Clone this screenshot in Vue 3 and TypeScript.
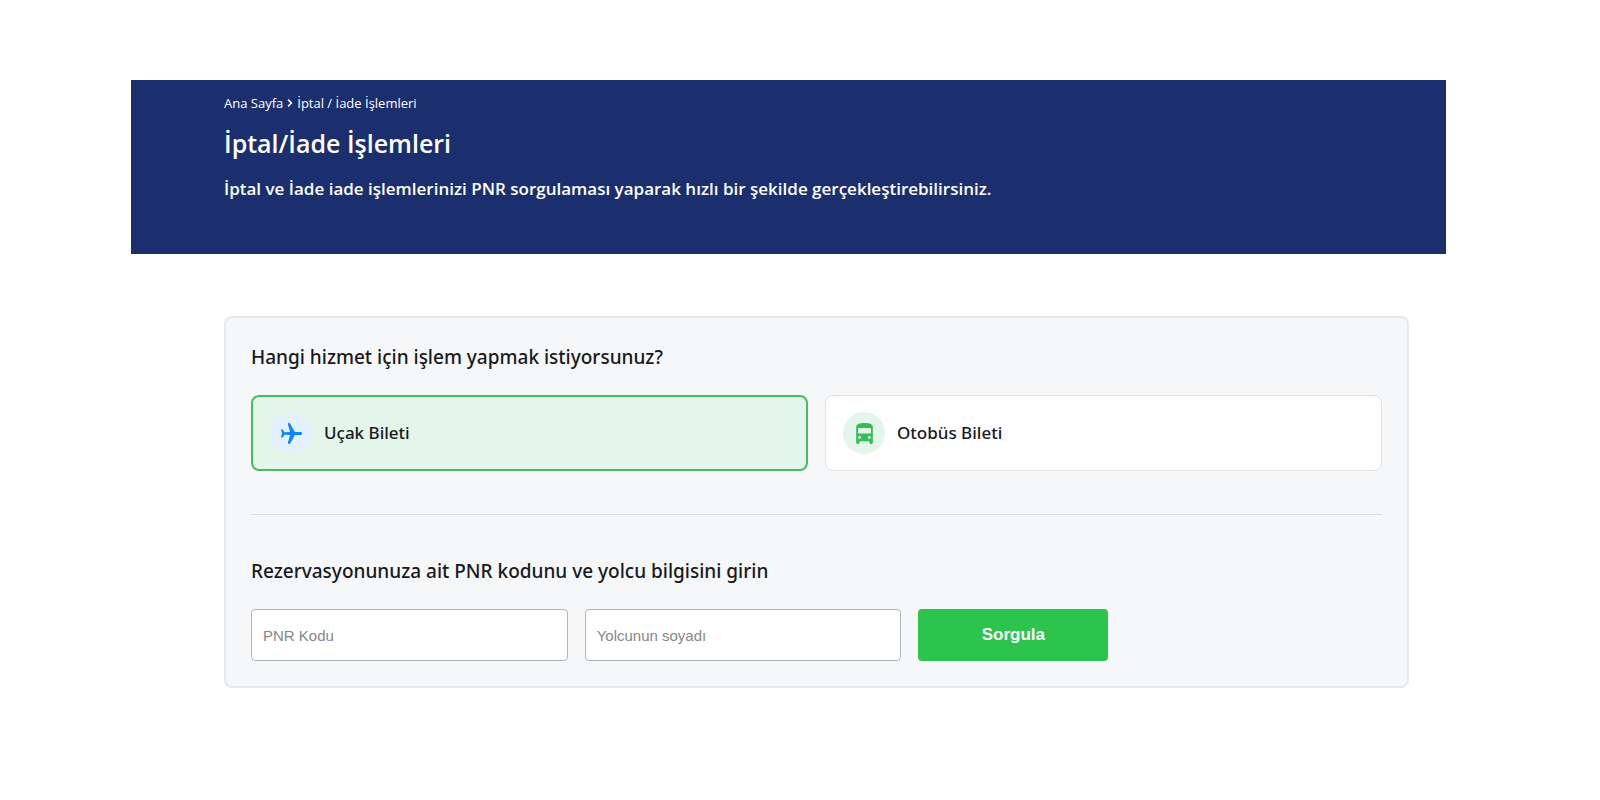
<script setup lang="ts">
import { ref } from 'vue'

type Service = 'flight' | 'bus'

const services: { id: Service; label: string }[] = [
  { id: 'flight', label: 'Uçak Bileti' },
  { id: 'bus', label: 'Otobüs Bileti' },
]

const selected = ref<Service>('flight')
const pnr = ref('')
const surname = ref('')
</script>

<template>
  <div class="page">
    <header class="banner">
      <nav class="breadcrumb">
        <a href="#">Ana Sayfa</a>
        <svg class="chevron" viewBox="0 0 6 8" aria-hidden="true">
          <path d="M1 0.6 4.400 4 1 7.400" />
        </svg>
        <span>İptal / İade İşlemleri</span>
      </nav>
      <h1>İptal/İade İşlemleri</h1>
      <p>İptal ve İade iade işlemlerinizi PNR sorgulaması yaparak hızlı bir şekilde gerçekleştirebilirsiniz.</p>
    </header>

    <main class="panel">
      <h2 id="service-title">Hangi hizmet için işlem yapmak istiyorsunuz?</h2>
      <div class="services" role="radiogroup" aria-labelledby="service-title">
        <label
          v-for="service in services"
          :key="service.id"
          class="service"
          :class="{ active: selected === service.id }"
        >
          <input v-model="selected" type="radio" name="service" :value="service.id" />
          <span class="icon" :class="service.id">
            <svg v-if="service.id === 'flight'" viewBox="0 0 24 24" aria-hidden="true">
              <path
                d="M22.200 12c0-.900-.700-1.400-1.600-1.400h-5.400L11 3c-.4-.8-.8-1.100-1.400-1.100-.8 0-1.200.6-1 1.400l2 7.300-5.200.1L3.600 8.400c-.3-.4-.8-.5-1.200-.4-.4.2-.5.5-.4.9L3 12l-1 3.100c-.1.4 0 .7.4.9.4.1.9 0 1.200-.4l1.800-2.300 5.200.1-2 7.300c-.2.8.2 1.400 1 1.400.6 0 1-.3 1.400-1.100l4.200-7.600h5.400c.9 0 1.600-.5 1.600-1.400z"
              />
            </svg>
            <svg v-else viewBox="0 0 24 24" aria-hidden="true">
              <path
                fill-rule="evenodd"
                d="M4 18.500v2.200c0 .7.500 1.300 1.200 1.300h.9c.7 0 1.200-.6 1.200-1.300V19.500h9.400v1.200c0 .7.500 1.300 1.200 1.300h.9c.7 0 1.200-.6 1.200-1.300V6c0-3.200-3.300-4-8-4s-8 .8-8 4zM7.300 17.200a1.400 1.400 0 1 1 0-2.800 1.400 1.400 0 0 1 0 2.800zm9.400 0a1.400 1.400 0 1 1 0-2.800 1.400 1.400 0 0 1 0 2.800zM18.200 11.200c0 .5-.4.8-.8.8H6.600c-.4 0-.8-.3-.8-.8V7.400c0-.5.4-.8.8-.8h10.800c.4 0 .8.3.8.8z"
              />
            </svg>
          </span>
          <span>{{ service.label }}</span>
        </label>
      </div>

      <hr />

      <h2>Rezervasyonunuza ait PNR kodunu ve yolcu bilgisini girin</h2>
      <form class="query" @submit.prevent>
        <input v-model="pnr" type="text" placeholder="PNR Kodu" aria-label="PNR Kodu" />
        <input v-model="surname" type="text" placeholder="Yolcunun soyadı" aria-label="Yolcunun soyadı" />
        <button type="submit">Sorgula</button>
      </form>
    </main>
  </div>
</template>

<style>
body {
  background: #fff;
}
</style>

<style scoped>
.page {
  padding: 80px 154px 40px 131px;
  font-family: 'Noto Sans', 'Open Sans', sans-serif;
  color: #17191c;
}

.banner {
  padding: 12px 93px 53px;
  background: #1b2f6e;
  color: #fff;
  font-family: 'Open Sans', 'Noto Sans', sans-serif;
}

.breadcrumb {
  display: flex;
  align-items: center;
  gap: 4px;
  font-size: 13px;
  line-height: 22px;
}

.breadcrumb a {
  color: inherit;
  text-decoration: none;
}

.chevron {
  width: 6px;
  height: 8px;
  fill: none;
  stroke: #fff;
  stroke-width: 1.5;
}

h1 {
  margin: 11px 0 16px;
  font-size: 25px;
  font-weight: 600;
  line-height: 36px;
}

p {
  margin: 0;
  font-size: 17px;
  font-weight: 600;
  line-height: 24px;
}

.panel {
  margin: 62px 37px 0 93px;
  padding: 25px;
  border: 2px solid #e6e8ea;
  border-radius: 8px;
  background: #f5f7f9;
}

h2 {
  margin: 0 0 24px;
  font-size: 19px;
  font-weight: 500;
  line-height: 28px;
}

.services {
  display: grid;
  grid-template-columns: 1fr 1fr;
  gap: 17px;
}

.service {
  display: flex;
  align-items: center;
  gap: 12px;
  padding: 16px 17px;
  border: 1px solid #e0e3e6;
  border-radius: 8px;
  background: #fff;
  font-size: 17px;
  font-weight: 500;
  line-height: 24px;
  cursor: pointer;
}

.service.active {
  padding: 15px 17px;
  border: 2px solid #45bd60;
  background: #e4f6ea;
}

.service input {
  position: absolute;
  opacity: 0;
  pointer-events: none;
}

.icon {
  display: flex;
  align-items: center;
  justify-content: center;
  width: 42px;
  height: 42px;
  border-radius: 50%;
}

.icon svg {
  width: 25px;
  height: 25px;
}

.flight {
  background: #e3f1fd;
  fill: #0f86f3;
}

.bus {
  background: #e4f6ea;
  fill: #37bd55;
}

hr {
  margin: 43px 0 42px;
  border: 0;
  border-top: 1px solid #dadde0;
}

.query {
  display: grid;
  grid-template-columns: 28% 28% 190px;
  gap: 17px;
}

.query input,
.query button {
  box-sizing: border-box;
  height: 52px;
  border-radius: 4px;
  font-family: 'Liberation Sans', Arial, sans-serif;
}

.query input {
  width: 100%;
  padding: 0 11px;
  border: 1px solid #b2b5b9;
  background: #fff;
  font-size: 15px;
  color: #17191c;
}

.query input::placeholder {
  color: #858789;
}

.query button {
  border: 0;
  background: #2dc44d;
  color: #fff;
  font-size: 17px;
  font-weight: 700;
  cursor: pointer;
}
</style>
